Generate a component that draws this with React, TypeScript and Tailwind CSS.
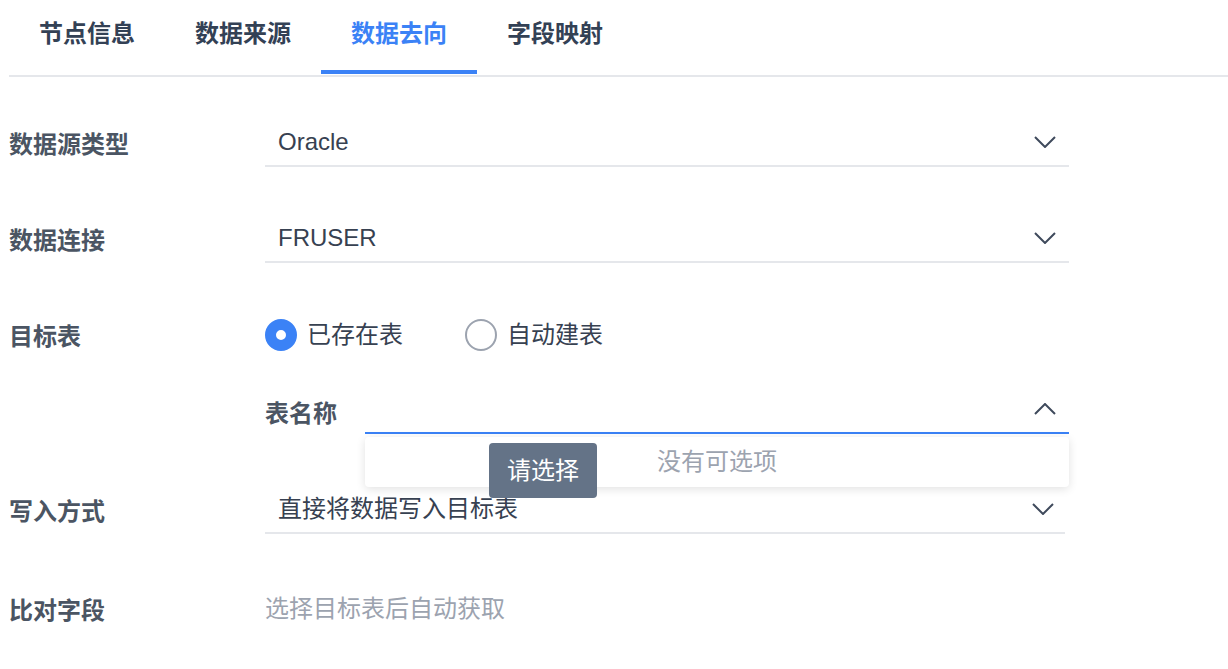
import React from "react";

const FONT = '"Liberation Sans", "Noto Sans CJK SC", sans-serif';

function ChevronDown() {
  return (
    <svg width="22" height="12" viewBox="0 0 22 12" fill="none">
      <polyline points="1,1 11,11 21,1" stroke="#3f4a5c" strokeWidth="2" />
    </svg>
  );
}

function ChevronUp() {
  return (
    <svg width="22" height="12" viewBox="0 0 22 12" fill="none">
      <polyline points="1,11 11,1 21,11" stroke="#3f4a5c" strokeWidth="2" />
    </svg>
  );
}

const tabs = ["节点信息", "数据来源", "数据去向", "字段映射"];

function Label({ children }: { children: React.ReactNode }) {
  return (
    <div className="w-[256px] shrink-0 mt-[4px] text-[24px] leading-[36px] font-bold text-[#4b5563]">
      {children}
    </div>
  );
}

export default function App() {
  return (
    <div
      className="w-[1228px] h-[669px] bg-white overflow-hidden"
      style={{ fontFamily: FONT }}
    >
      <div className="pl-[9px]">
        <div className="flex border-b-2 border-[#e5e7eb]">
          {tabs.map((t, i) => {
            const active = i === 2;
            return (
              <div key={t} className="w-[156px] flex flex-col items-center pt-[16px]">
                <div
                  className={
                    "text-[24px] leading-[36px] font-bold " +
                    (active ? "text-[#3b82f6]" : "text-[#334155]")
                  }
                >
                  {t}
                </div>
                <div
                  className={
                    "mt-[18px] mb-[1px] h-[4px] w-full " +
                    (active ? "bg-[#3b82f6]" : "bg-transparent")
                  }
                />
              </div>
            );
          })}
        </div>
      </div>

      <div className="pl-[9px] pt-[42px] text-[24px] text-[#374151]">
        <div className="flex items-center h-[48px]">
          <Label>数据源类型</Label>
          <div className="w-[804px] h-[48px] border-b-2 border-[#e5e7eb] flex items-center justify-between pl-[13px] pr-[13px]">
            <span className="leading-[36px]">Oracle</span>
            <ChevronDown />
          </div>
        </div>

        <div className="flex items-center h-[48px] mt-[48px]">
          <Label>数据连接</Label>
          <div className="w-[804px] h-[48px] border-b-2 border-[#e5e7eb] flex items-center justify-between pl-[13px] pr-[13px]">
            <span className="leading-[36px]">FRUSER</span>
            <ChevronDown />
          </div>
        </div>

        <div className="flex items-center h-[48px] mt-[48px]">
          <Label>目标表</Label>
          <div className="flex items-center gap-[62px]">
            <div className="flex items-center">
              <div className="w-[32px] h-[32px] rounded-full border-[11px] border-[#3b82f6] bg-white" />
              <span className="ml-[10px] leading-[36px] text-[#374151]">已存在表</span>
            </div>
            <div className="flex items-center">
              <div className="w-[32px] h-[32px] rounded-full border-2 border-[#9ca3af] bg-white" />
              <span className="ml-[10px] leading-[36px] text-[#374151]">自动建表</span>
            </div>
          </div>
        </div>

        <div className="flex items-center h-[48px] mt-[27px] ml-[256px] relative z-10">
          <div className="w-[100px] shrink-0 mt-[8px] text-[24px] leading-[36px] font-bold text-[#4b5563]">
            表名称
          </div>
          <div className="relative w-[704px] h-[48px] border-b-2 border-[#3b82f6] flex items-center justify-end pr-[13px]">
            <ChevronUp />
            <div className="absolute left-0 top-[51px] w-[704px] h-[50px] bg-white rounded-[4px] shadow-[0_2px_10px_rgba(0,0,0,0.12)] flex items-center justify-center text-[#9ca3af] leading-[36px]">
              没有可选项
            </div>
            <div className="absolute left-[124px] top-[57px] w-[108px] h-[55px] bg-[#647387] rounded-[4px] flex items-center justify-center text-white leading-[36px]">
              请选择
            </div>
          </div>
        </div>

        <div className="flex items-center h-[48px] mt-[52px]">
          <Label>写入方式</Label>
          <div className="w-[800px] h-[48px] border-b-2 border-[#e5e7eb] flex items-center justify-between pl-[13px] pr-[11px]">
            <span className="leading-[36px]">直接将数据写入目标表</span>
            <ChevronDown />
          </div>
        </div>

        <div className="flex items-center h-[48px] mt-[51px]">
          <Label>比对字段</Label>
          <div className="leading-[36px] text-[#9ca3af]">选择目标表后自动获取</div>
        </div>
      </div>
    </div>
  );
}
